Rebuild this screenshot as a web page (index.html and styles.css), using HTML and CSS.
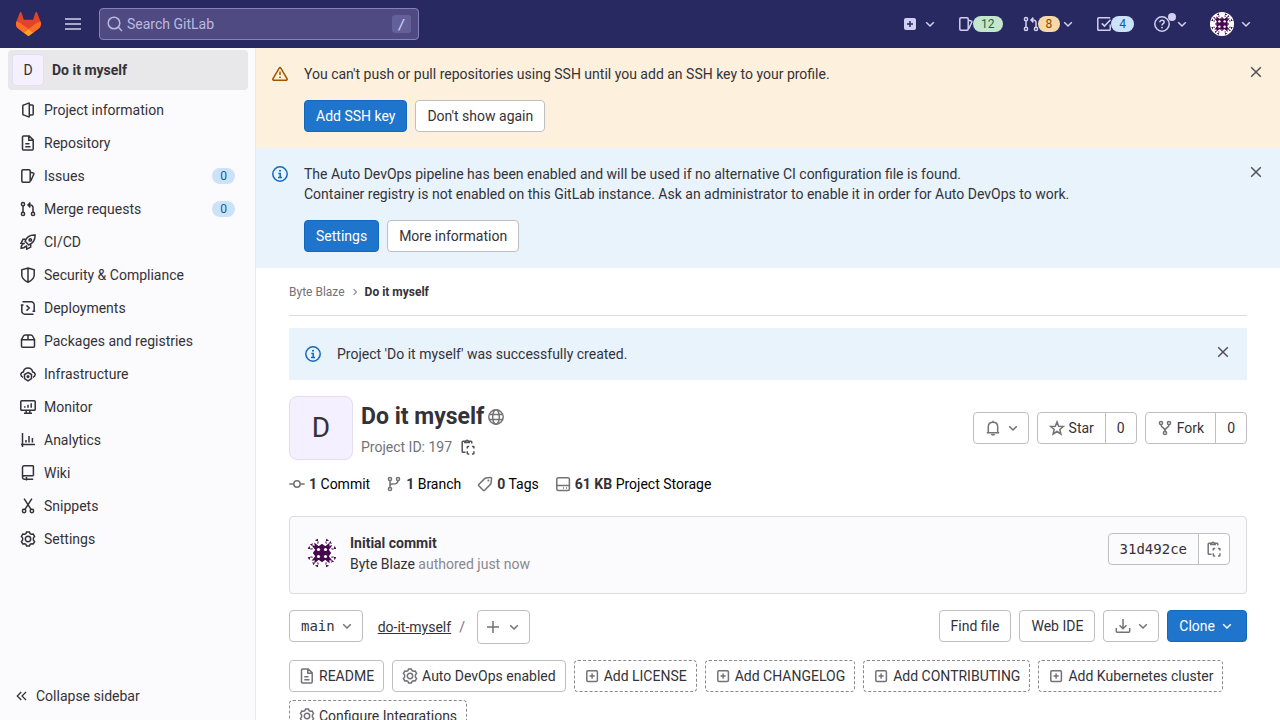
FILE: index.html
```html
<!DOCTYPE html>
<html lang="en">
<head>
<meta charset="utf-8">
<title>Byte Blaze / Do it myself · GitLab</title>
<link rel="stylesheet" href="styles.css">
</head>
<body>
<svg class="sprite" aria-hidden="true">
  <symbol id="chevron" viewBox="0 0 16 16"><path d="M4.200 6.200 8 10l3.800-3.800"/></symbol>
  <symbol id="menu" viewBox="0 0 16 16"><path d="M0 3h16M0 8h16M0 13h16"/></symbol>
  <symbol id="search" viewBox="0 0 16 16"><circle cx="7" cy="7" r="5.8"/><path d="m11.3 11.3 3.7 3.7"/></symbol>
  <symbol id="close" viewBox="0 0 16 16"><path d="m3.2 3.2 9.600 9.600M12.800 3.2l-9.600 9.600"/></symbol>
  <symbol id="issues" viewBox="0 0 16 16"><rect x="1.8" y="1.8" width="8.4" height="12.4" rx="1.2"/><path d="M10.2 4.2 13.3 5a.8.8 0 0 1 .6 1l-3.2 7"/></symbol>
  <symbol id="merge" viewBox="0 0 16 16"><circle cx="3" cy="3.2" r="1.6"/><circle cx="3" cy="12.9" r="1.6"/><circle cx="13" cy="12.9" r="1.6"/><path d="M3 4.8v6.5M13 11.3V6.5a2.5 2.5 0 0 0-2.5-2.5H8.2M10.4 1.6 8 4l2.4 2.4"/></symbol>
  <symbol id="todo" viewBox="0 0 16 16"><path d="M14.2 8.5v5a.8.8 0 0 1-.8.8H2.6a.8.8 0 0 1-.8-.8v-11a.8.8 0 0 1 .8-.8h11.6M5.8 7.4l2.7 2.7 6-6.3"/></symbol>
  <symbol id="help" viewBox="0 0 16 16"><circle cx="8" cy="8" r="7.2"/><path d="M5.8 6.3c0-2.8 4.4-2.6 4.4 0C10.2 7.8 8 7.7 8 9.5"/><circle class="dot-fill" cx="8" cy="11.6" r=".9"/></symbol>
  <symbol id="project" viewBox="0 0 16 16"><path d="M9.300 14.400V1.600a.5.5 0 0 0-.7-.5L3.600 3.100a1 1 0 0 0-.8 1v7.800a1 1 0 0 0 .8 1l5 2a.5.5 0 0 0 .7-.5zM9.3 3h3a.9.9 0 0 1 .9.9v8.2a.9.9 0 0 1-.9.9h-3"/></symbol>
  <symbol id="doc" viewBox="0 0 16 16"><path d="M3.5.9h5.7l4 4v9.2a1 1 0 0 1-1 1H3.5a1 1 0 0 1-1-1V1.9a1 1 0 0 1 1-1zM8.8 1v4.2h4.3M5.3 8.8h4.2M5.3 11.7h5.2"/></symbol>
  <symbol id="rocket" viewBox="0 0 16 16"><path d="M15.1 1c-5-.2-8.400 1.400-10 6.300L8.700 11C13.500 9.300 15.200 6 15.100 1zM5.500 5.300H3L.9 9.300l4 .2M10.700 10.500v2.600l-4 2.100-.2-4M3.500 9.800c-1.800.6-2.300 2-2.400 4.500 2.300-.1 3.800-.5 4.500-2.300"/><circle cx="10.300" cy="5.900" r="1.200"/></symbol>
  <symbol id="shield" viewBox="0 0 16 16"><path d="M8 1 14.200 2.900V8c0 3.300-2.600 5.600-6.200 7.200C4.400 13.600 1.800 11.300 1.800 8V2.900zM8 1v14"/></symbol>
  <symbol id="deploy" viewBox="0 0 16 16"><path d="M2.500 1.800h8.700a3 3 0 0 1 3 3v6.400M13.500 14.200H4.800a3 3 0 0 1-3-3V5M.800 5h2.700M12.500 11.200h2.700M6.500 5.400 9.200 8 6.500 10.600"/></symbol>
  <symbol id="package" viewBox="0 0 16 16"><path d="M1.500 6.700v6.500a1 1 0 0 0 1 1h11a1 1 0 0 0 1-1V6.700zM1.500 6.700 3.400 3a2 2 0 0 1 1.800-1.100h5.600A2 2 0 0 1 12.600 3l1.900 3.700M8 1.900v4.800"/></symbol>
  <symbol id="cloud" viewBox="0 0 16 16"><path d="M3 11.400C-.3 9.800.5 6.200 3.400 5.900 4.200.7 11.800.7 12.600 5.900c2.900.3 3.700 3.900.4 5.500M8 6.500l3.500 2v4.200L8 14.800l-3.500-2.100V8.500z"/><circle cx="8" cy="10.600" r=".8"/></symbol>
  <symbol id="monitor" viewBox="0 0 16 16"><rect x=".8" y="1.800" width="14.400" height="9.400" rx=".8"/><path d="M4.800 8.800V7.200M8 8.800V5.800M11.200 8.800V4.200M6.200 11.200v3M9.800 11.200v3M4 14.200h8"/></symbol>
  <symbol id="analytics" viewBox="0 0 16 16"><path d="M2.500 1v14M1 12.400h14M6 10.500V8M9 10.500V4M12.400 10.500V6"/></symbol>
  <symbol id="wiki" viewBox="0 0 16 16"><path d="M13.400 10.800V1.500a.7.700 0 0 0-.7-.7H4.200A1.700 1.700 0 0 0 2.500 2.500v10a1.700 1.700 0 0 0 1.700 1.700h9M2.500 12.500c0-1 .7-1.700 1.700-1.700h9.200M6.500 12v3.500"/></symbol>
  <symbol id="scissors" viewBox="0 0 16 16"><circle cx="4.100" cy="13" r="1.700"/><circle cx="11.900" cy="13" r="1.700"/><path d="m5 11.400 6.900-10.700M11 11.400 4.100.7"/></symbol>
  <symbol id="gear" viewBox="0 0 16 16"><path d="M6.600.9h2.800l.7 1.700 1.300.7 1.800-.3 1.400 2.400-1.200 1.500v2.200l1.200 1.500-1.400 2.400-1.800-.3-1.300.7-.7 1.700H6.600l-.7-1.700-1.300-.7-1.800.3-1.400-2.400 1.200-1.500V6.900L1.400 5.400 2.800 3l1.800.3 1.300-.7z"/><circle cx="8" cy="8" r="2.700"/></symbol>
  <symbol id="collapse" viewBox="0 0 16 16"><path d="M7.300 4 3.300 8l4 4M12 4 8 8l4 4"/></symbol>
  <symbol id="warning" viewBox="0 0 16 16"><path d="M7.200 2.100.9 12.900a.9.900 0 0 0 .8 1.300h12.600a.9.900 0 0 0 .8-1.300L8.800 2.100a.9.900 0 0 0-1.600 0zM8 5.500v3.600"/><circle class="dot-fill" cx="8" cy="11.300" r=".9"/></symbol>
  <symbol id="info" viewBox="0 0 16 16"><circle cx="8" cy="8" r="7.2"/><path d="M6.300 7.500h1.900v3.800M6 11.400h4"/><circle class="dot-fill" cx="8" cy="4.800" r="1"/></symbol>
  <symbol id="globe" viewBox="0 0 16 16"><circle cx="8" cy="8" r="7.2"/><ellipse cx="8" cy="8" rx="3.300" ry="7.200"/><path d="M1.400 5.500h13.200M1.400 10.500h13.200"/></symbol>
  <symbol id="copy" viewBox="0 0 16 16"><path d="M5.500 13.300H3a.8.800 0 0 1-.8-.8V3a.8.800 0 0 1 .8-.8h1.500M9.500 2.200H11a.8.800 0 0 1 .8.800v1.500M4.800 3.500V2.200h.9a1.400 1.400 0 0 1 2.700 0h.9v1.300zM7.300 9.500V8a.6.600 0 0 1 .6-.6h1.300M12 7.400h1.300a.6.600 0 0 1 .6.600v1.500M13.900 12.300v2a.6.600 0 0 1-.6.600H12M9.200 14.900H7.900a.6.600 0 0 1-.6-.6v-2"/></symbol>
  <symbol id="commit" viewBox="0 0 16 16"><circle cx="8" cy="8" r="3.200"/><path d="M.3 8h4.500M11.200 8h4.500"/></symbol>
  <symbol id="branch" viewBox="0 0 16 16"><circle cx="4" cy="3" r="1.600"/><circle cx="12" cy="3" r="1.600"/><circle cx="4" cy="13" r="1.600"/><path d="M4 4.700v6.600M12 4.700C12 8 9 8 6.500 8 5 8 4 8.800 4 10"/></symbol>
  <symbol id="tag" viewBox="0 0 16 16"><path d="m8.800 2 4.700-.6a1 1 0 0 1 1.100 1.100L14 7.200a2 2 0 0 1-.6 1.200l-5.800 5.800a1 1 0 0 1-1.400 0L1.800 9.800a1 1 0 0 1 0-1.400L7.600 2.600A2 2 0 0 1 8.800 2z"/><circle class="dot-fill" cx="11.400" cy="4.600" r="1"/></symbol>
  <symbol id="disk" viewBox="0 0 16 16"><rect x="1.800" y="1.800" width="12.600" height="12.600" rx="1.500"/><path d="M1.800 9.500h12.600M8 12h1M11 12h1"/></symbol>
  <symbol id="bell" viewBox="0 0 16 16"><path d="M1.800 12.800h12.400M3.300 12.800V6.800C3.300 4 5.300 2.200 8 2.200s4.700 1.800 4.700 4.600v6M8 .8v1.400M6.500 14c.3 1.200 2.700 1.200 3 0"/></symbol>
  <symbol id="star" viewBox="0 0 16 16"><path d="m8 1.900 1.700 4.300 4.600.3-3.500 3 1.100 4.500L8 11.500 4.100 14l1.100-4.500-3.500-3 4.600-.3z"/></symbol>
  <symbol id="fork" viewBox="0 0 16 16"><circle cx="4" cy="3" r="1.600"/><circle cx="12" cy="3" r="1.600"/><circle cx="8" cy="13" r="1.600"/><path d="M4 4.700c0 3.800 4 1.800 4 6.600M12 4.700C12 8.500 8 6.500 8 11.300"/></symbol>
  <symbol id="plus" viewBox="0 0 16 16"><path d="M8 2v12M2 8h12"/></symbol>
  <symbol id="download" viewBox="0 0 16 16"><path d="M1.300 10v3.200a1 1 0 0 0 1 1h11.400a1 1 0 0 0 1-1V10M8 1v9.500M4.500 7.300 8 10.700l3.500-3.400"/></symbol>
  <symbol id="add" viewBox="0 0 16 16"><rect x="2.800" y="2.800" width="10.600" height="10.600" rx="1.200"/><path d="M8.100 5.500v5.200M5.500 8.100h5.200"/></symbol>
  <symbol id="identicon" viewBox="0 0 32 32">
    <g fill="#47094f" stroke="none">
      <rect x="9" y="9" width="14" height="14"/>
      <g id="side"><path d="M9 10.500 8.200 5.500 12.500 9zM13 9 16 6.800 19 9zM23 10.500 23.800 5.500 19.500 9zM8.800 3.200 12 1.800v2.800zM23.200 3.200 20 1.800v2.800zM10.800 6.500 12.500 4v2.500zM21.200 6.500 19.500 4v2.500zM3.800 7.500 7 6.200 6 8.800z"/></g>
      <use href="#side" transform="rotate(90 16 16)"/><use href="#side" transform="rotate(180 16 16)"/><use href="#side" transform="rotate(270 16 16)"/>
    </g>
    <g fill="#fff" stroke="none"><circle cx="12.500" cy="12.500" r="1.600"/><circle cx="19.500" cy="12.500" r="1.600"/><circle cx="12.500" cy="19.500" r="1.600"/><circle cx="19.500" cy="19.500" r="1.600"/></g>
  </symbol>
</svg>

<header class="navbar">
  <a class="brand" href="#" aria-label="Dashboard">
    <svg class="logo" viewBox="0 0 25 24"><path d="m24.500 9.500-.03-.090L21.080.56a.9.900 0 0 0-1.700.09l-2.290 7.010H7.830L5.540.65A.9.900 0 0 0 3.840.56L.450 9.400l-.03.090a6.300 6.300 0 0 0 2.090 7.280l5.180 3.880 2.560 1.940 1.560 1.180a1.050 1.050 0 0 0 1.270 0l1.560-1.180 2.560-1.940 5.220-3.900a6.300 6.300 0 0 0 2.080-7.250z" fill="#e24329"/><path d="m24.500 9.500-.03-.090a11.400 11.400 0 0 0-4.560 2.050l-7.450 5.630 4.740 3.590 5.220-3.910a6.300 6.300 0 0 0 2.080-7.270z" fill="#fc6d26"/><path d="m7.700 20.650 2.560 1.940 1.560 1.180a1.050 1.050 0 0 0 1.270 0l1.560-1.180 2.560-1.940-4.750-3.570z" fill="#fca326"/><path d="M5.010 11.460A11.400 11.400 0 0 0 .450 9.400l-.03.090a6.300 6.300 0 0 0 2.090 7.280l5.180 3.880 4.760-3.580z" fill="#fc6d26"/></svg>
  </a>
  <button class="plain" type="button" aria-label="Menu"><svg class="icon menu-icon"><use href="#menu"/></svg></button>
  <form class="search" role="search">
    <svg class="icon"><use href="#search"/></svg>
    <input type="text" placeholder="Search GitLab" aria-label="Search GitLab">
    <kbd>/</kbd>
  </form>
  <nav class="nav-tools" aria-label="Tools">
    <button class="plain tool" type="button" aria-label="Create new"><svg class="icon" viewBox="0 0 16 16"><rect class="lavender" x="2" y="2" width="12" height="12" rx="2"/><path class="navy" d="M8 5v6M5 8h6"/></svg><svg class="icon chevron-gap"><use href="#chevron"/></svg></button>
    <a class="tool" href="#" aria-label="Issues"><svg class="icon"><use href="#issues"/></svg><span class="badge green">12</span></a>
    <button class="plain tool" type="button" aria-label="Merge requests"><svg class="icon"><use href="#merge"/></svg><span class="badge orange">8</span><svg class="icon"><use href="#chevron"/></svg></button>
    <a class="tool" href="#" aria-label="To-Do List"><svg class="icon"><use href="#todo"/></svg><span class="badge blue">4</span></a>
    <button class="plain tool help" type="button" aria-label="Help"><svg class="icon"><use href="#help"/></svg><span class="notice"></span><svg class="icon chevron-gap"><use href="#chevron"/></svg></button>
    <button class="plain tool" type="button" aria-label="Byte Blaze"><svg class="avatar-small"><use href="#identicon"/></svg><svg class="icon chevron-gap"><use href="#chevron"/></svg></button>
  </nav>
</header>

<div class="layout">
  <aside class="sidebar">
    <a class="context" href="#"><span class="letter">D</span><span>Do it myself</span></a>
    <nav class="side-nav" aria-label="Project navigation">
      <a href="#"><svg class="icon"><use href="#project"/></svg><span>Project information</span></a>
      <a href="#"><svg class="icon"><use href="#doc"/></svg><span>Repository</span></a>
      <a href="#"><svg class="icon"><use href="#issues"/></svg><span>Issues</span><span class="badge count">0</span></a>
      <a href="#"><svg class="icon"><use href="#merge"/></svg><span>Merge requests</span><span class="badge count">0</span></a>
      <a href="#"><svg class="icon"><use href="#rocket"/></svg><span>CI/CD</span></a>
      <a href="#"><svg class="icon"><use href="#shield"/></svg><span>Security &amp; Compliance</span></a>
      <a href="#"><svg class="icon"><use href="#deploy"/></svg><span>Deployments</span></a>
      <a href="#"><svg class="icon"><use href="#package"/></svg><span>Packages and registries</span></a>
      <a href="#"><svg class="icon"><use href="#cloud"/></svg><span>Infrastructure</span></a>
      <a href="#"><svg class="icon"><use href="#monitor"/></svg><span>Monitor</span></a>
      <a href="#"><svg class="icon"><use href="#analytics"/></svg><span>Analytics</span></a>
      <a href="#"><svg class="icon"><use href="#wiki"/></svg><span>Wiki</span></a>
      <a href="#"><svg class="icon"><use href="#scissors"/></svg><span>Snippets</span></a>
      <a href="#"><svg class="icon"><use href="#gear"/></svg><span>Settings</span></a>
    </nav>
    <button class="plain collapse" type="button"><svg class="icon"><use href="#collapse"/></svg>Collapse sidebar</button>
  </aside>

  <main class="content">
    <section class="alert alert-warning">
      <svg class="icon"><use href="#warning"/></svg>
      <div class="alert-body">
        <p>You can't push or pull repositories using SSH until you add an SSH key to your profile.</p>
        <div class="actions"><a class="btn primary" href="#">Add SSH key</a><button class="btn" type="button">Don't show again</button></div>
      </div>
      <button class="plain dismiss" type="button" aria-label="Dismiss"><svg class="icon"><use href="#close"/></svg></button>
    </section>
    <section class="alert alert-info">
      <svg class="icon"><use href="#info"/></svg>
      <div class="alert-body">
        <p>The Auto DevOps pipeline has been enabled and will be used if no alternative CI configuration file is found.<br>Container registry is not enabled on this GitLab instance. Ask an administrator to enable it in order for Auto DevOps to work.</p>
        <div class="actions"><a class="btn primary" href="#">Settings</a><a class="btn" href="#">More information</a></div>
      </div>
      <button class="plain dismiss" type="button" aria-label="Dismiss"><svg class="icon"><use href="#close"/></svg></button>
    </section>

    <div class="container">
      <nav class="breadcrumbs" aria-label="Breadcrumbs">
        <a href="#">Byte Blaze</a><svg class="icon crumb"><use href="#chevron"/></svg><a class="current" href="#">Do it myself</a>
      </nav>
      <section class="alert alert-info flash">
        <svg class="icon"><use href="#info"/></svg>
        <div class="alert-body"><p>Project 'Do it myself' was successfully created.</p></div>
        <button class="plain dismiss" type="button" aria-label="Dismiss"><svg class="icon"><use href="#close"/></svg></button>
      </section>

      <div class="project-head">
        <span class="project-avatar">D</span>
        <div class="project-title">
          <h1>Do it myself <svg class="icon"><use href="#globe"/></svg></h1>
          <div class="project-id">Project ID: 197 <button class="plain" type="button" aria-label="Copy project ID"><svg class="icon"><use href="#copy"/></svg></button></div>
        </div>
        <div class="project-actions">
          <button class="btn drop" type="button" aria-label="Notifications"><svg class="icon"><use href="#bell"/></svg><svg class="icon"><use href="#chevron"/></svg></button>
          <div class="group"><button class="btn" type="button"><svg class="icon"><use href="#star"/></svg>Star</button><a class="btn" href="#">0</a></div>
          <div class="group"><a class="btn" href="#"><svg class="icon"><use href="#fork"/></svg>Fork</a><a class="btn" href="#">0</a></div>
        </div>
      </div>

      <div class="stats">
        <a href="#"><svg class="icon"><use href="#commit"/></svg><span><strong>1</strong> Commit</span></a>
        <a href="#"><svg class="icon"><use href="#branch"/></svg><span><strong>1</strong> Branch</span></a>
        <a href="#"><svg class="icon"><use href="#tag"/></svg><span><strong>0</strong> Tags</span></a>
        <a href="#"><svg class="icon"><use href="#disk"/></svg><span><strong>61 KB</strong> Project Storage</span></a>
      </div>

      <section class="commit-box">
        <svg class="avatar"><use href="#identicon"/></svg>
        <div class="commit-text"><a class="commit-title" href="#">Initial commit</a><div><a href="#">Byte Blaze</a> <span class="muted">authored just now</span></div></div>
        <div class="group"><span class="btn sha">31d492ce</span><button class="btn square" type="button" aria-label="Copy commit SHA"><svg class="icon"><use href="#copy"/></svg></button></div>
      </section>

      <div class="tree-bar">
        <button class="btn drop mono" type="button">main<svg class="icon"><use href="#chevron"/></svg></button>
        <div class="path"><a href="#">do-it-myself</a><span>/</span></div>
        <button class="btn add-file" type="button" aria-label="Add to tree"><svg class="icon"><use href="#plus"/></svg><svg class="icon"><use href="#chevron"/></svg></button>
        <div class="tree-actions">
          <a class="btn" href="#">Find file</a>
          <a class="btn" href="#">Web IDE</a>
          <button class="btn drop" type="button" aria-label="Download"><svg class="icon"><use href="#download"/></svg><svg class="icon"><use href="#chevron"/></svg></button>
          <button class="btn primary" type="button">Clone<svg class="icon"><use href="#chevron"/></svg></button>
        </div>
      </div>

      <div class="pills">
        <a class="btn pill" href="#"><svg class="icon"><use href="#doc"/></svg>README</a>
        <a class="btn pill" href="#"><svg class="icon"><use href="#gear"/></svg>Auto DevOps enabled</a>
        <a class="btn pill dashed" href="#"><svg class="icon"><use href="#add"/></svg>Add LICENSE</a>
        <a class="btn pill dashed" href="#"><svg class="icon"><use href="#add"/></svg>Add CHANGELOG</a>
        <a class="btn pill dashed" href="#"><svg class="icon"><use href="#add"/></svg>Add CONTRIBUTING</a>
        <a class="btn pill dashed" href="#"><svg class="icon"><use href="#add"/></svg>Add Kubernetes cluster</a>
        <a class="btn pill dashed" href="#"><svg class="icon"><use href="#gear"/></svg>Configure Integrations</a>
      </div>
    </div>
  </main>
</div>
</body>
</html>
```
FILE: styles.css
```css
* { box-sizing: border-box; }

body {
  display: flex;
  flex-direction: column;
  height: 100vh;
  margin: 0;
  overflow: hidden;
  background: #fff;
  color: #333238;
  font: 14px/20px Roboto, "Noto Sans", sans-serif;
}

a { color: inherit; text-decoration: none; }
p { margin: 0; }
button, input { font: inherit; color: inherit; }

.sprite { position: absolute; width: 0; height: 0; }

.icon {
  flex: none;
  width: 16px;
  height: 16px;
  fill: none;
  stroke: currentColor;
  stroke-width: 1.5;
}

.dot-fill { fill: currentColor; stroke: none; }

.plain {
  display: flex;
  padding: 0;
  border: 0;
  background: none;
}

/* Top bar */
.navbar {
  display: flex;
  flex: none;
  align-items: center;
  height: 48px;
  padding: 0 26px 0 16px;
  background: #292961;
  color: #d1d0f0;
}

.brand { display: flex; margin-right: 24px; }
.logo { width: 25px; height: 24px; }
.menu-icon { stroke-width: 1.6; }

.search {
  display: flex;
  align-items: center;
  gap: 4px;
  width: 320px;
  height: 32px;
  margin-left: 18px;
  padding: 0 7px;
  border: 1px solid #8582b9;
  border-radius: 4px;
  background: #4f4b82;
  color: #bcb9e0;
}

.search input {
  flex: 1;
  min-width: 0;
  padding: 0;
  border: 0;
  outline: 0;
  background: transparent;
}

.search input::placeholder { color: #bcb9e0; opacity: 1; }

.search kbd {
  width: 19px;
  border-radius: 3px;
  background: #64619a;
  color: #d1d0f0;
  font: 14px/18px "DejaVu Sans Mono", monospace;
  text-align: center;
}

.nav-tools { display: flex; align-items: center; gap: 20px; margin-left: auto; }
.tool { display: flex; align-items: center; }
.chevron-gap { margin-left: 4px; }
.lavender { fill: #d1d0f0; stroke: none; }
.navy { stroke: #292961; }

.badge {
  padding: 0 8px;
  border-radius: 8px;
  font-size: 12px;
  line-height: 16px;
}

.tool .badge { margin-left: -1px; }
.green { background: #c3e6cd; color: #24663b; }
.orange { background: #f5d9a8; color: #8f4700; }
.blue, .count { background: #cbe2f9; color: #0b5cad; }

.help { position: relative; }

.notice {
  position: absolute;
  top: -3px;
  left: 14px;
  width: 8px;
  height: 8px;
  border-radius: 50%;
  background: #d1d0f0;
}

.avatar-small { width: 24px; height: 24px; border-radius: 50%; background: #fff; }

.layout { display: flex; flex: 1; min-height: 0; }

/* Sidebar */
.sidebar {
  display: flex;
  flex: none;
  flex-direction: column;
  width: 256px;
  padding: 2px 7px 8px 8px;
  border-right: 1px solid #e9e9ed;
  background: #fbfafd;
}

.context {
  display: flex;
  align-items: center;
  gap: 8px;
  padding: 4px;
  border-radius: 4px;
  background: #e8e8ea;
  font-weight: 700;
}

.letter {
  width: 32px;
  border: 1px solid #e3def0;
  border-radius: 4px;
  background: #f4f0ff;
  font-weight: 400;
  line-height: 30px;
  text-align: center;
}

.side-nav { display: grid; gap: 1px; margin-top: 4px; }

.side-nav a {
  display: flex;
  align-items: center;
  gap: 8px;
  height: 32px;
  padding: 0 13px 0 12px;
}

.count { margin-left: auto; }

.collapse { align-items: center; gap: 6px; margin-top: auto; padding: 6px; }
.collapse .icon { stroke-width: 1.3; }

/* Alerts */
.content { flex: 1; min-width: 0; overflow: hidden; }
.alert { display: flex; padding: 16px; }
.alert > .icon { margin-top: 2px; }
.alert-body { flex: 1; margin-left: 16px; }
.alert-warning { background: #fdf1dd; }
.alert-warning > .icon { color: #9e5400; }
.alert-info { background: #e9f3fc; }
.alert-info > .icon { color: #1068bf; }
.dismiss { align-self: flex-start; color: #535158; }
.actions { display: flex; gap: 8px; margin-top: 16px; }

.btn {
  display: inline-flex;
  align-items: center;
  justify-content: center;
  gap: 4px;
  height: 32px;
  padding: 0 11px;
  border: 1px solid #bfbfc3;
  border-radius: 4px;
  background: #fff;
  color: #333238;
  white-space: nowrap;
}

.btn .icon { color: #737278; }
.primary { border-color: #1068bf; background: #1f75cb; color: #fff; }
.primary .icon { color: #fff; }
.drop { padding-right: 7px; }
.mono, .sha { font-family: "DejaVu Sans Mono", monospace; }

.group { display: flex; }
.group .btn:first-child { border-radius: 4px 0 0 4px; }
.group .btn:last-child { margin-left: -1px; border-radius: 0 4px 4px 0; }

/* Project page */
.container { padding: 0 33px; }

.breadcrumbs {
  display: flex;
  align-items: center;
  height: 48px;
  border-bottom: 1px solid #dcdcde;
  color: #737278;
  font-size: 12px;
}

.crumb { width: 12px; height: 12px; margin: 0 4px; color: #89888d; transform: rotate(-90deg); }
.current { color: #333238; font-weight: 700; }
.flash { margin-top: 12px; }

.project-head { display: flex; align-items: center; margin-top: 16px; }

.project-avatar {
  width: 64px;
  margin-right: 8px;
  border: 1px solid #e3def0;
  border-radius: 8px;
  background: #f4f0ff;
  font-size: 28px;
  line-height: 62px;
  text-align: center;
}

.project-title { padding-bottom: 2px; }

.project-title h1 {
  display: flex;
  align-items: center;
  gap: 4px;
  margin: 0;
  font-size: 23px;
  font-weight: 700;
  line-height: 40px;
}

.project-title .icon { color: #737278; }
.project-id { display: flex; align-items: center; gap: 8px; color: #737278; }
.project-id .icon { color: #535158; }
.project-actions { display: flex; gap: 8px; margin-left: auto; }

.stats { display: flex; flex-wrap: wrap; gap: 16px; margin-top: 14px; color: #000; }
.stats a { display: flex; align-items: center; gap: 4px; }
.stats .icon { color: #737278; }
.stats strong { color: #333238; }

.commit-box {
  display: flex;
  align-items: flex-start;
  margin-top: 22px;
  padding: 16px 16px 18px;
  border: 1px solid #dcdcde;
  border-radius: 4px;
  background: #fbfafd;
  line-height: 21px;
}

.avatar { width: 32px; height: 32px; margin: 4px 12px 0 0; border-radius: 50%; background: #fff; }
.commit-text { flex: 1; }
.commit-title { font-weight: 700; }
.muted { color: #89888d; }
.sha { background: #fbfafd; }
.square { width: 32px; padding: 0; }

.tree-bar { display: flex; align-items: flex-start; margin-top: 16px; }
.path { display: flex; gap: 8px; margin: 7px 12px 0 15px; }
.path a { text-decoration: underline; }
.path span { color: #737278; }
.add-file { height: 34px; gap: 5px; padding: 0 7px; }
.tree-actions { display: flex; gap: 8px; margin-left: auto; }

.pills { display: flex; flex-wrap: wrap; gap: 8px; margin-top: 16px; }
.pill { padding: 0 9px; }
.dashed { border-style: dashed; border-color: #89888d; }
```
